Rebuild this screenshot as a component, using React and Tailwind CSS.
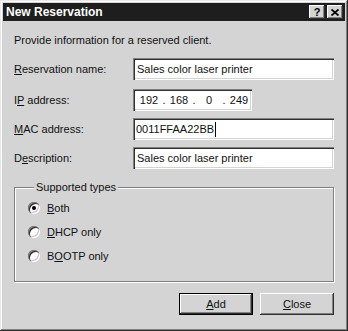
const font = { fontFamily: '"Liberation Sans", Arial, sans-serif' };

const sunken =
  "bg-white shadow-[inset_1px_1px_0_#808080,inset_2px_2px_0_#303030,inset_-1px_-1px_0_#ffffff,inset_-2px_-2px_0_#d4d4d4]";
const raised =
  "bg-[#d4d4d4] shadow-[inset_-1px_-1px_0_#303030,inset_1px_1px_0_#ffffff,inset_-2px_-2px_0_#808080]";

function Field({ label, children }) {
  return (
    <div className="flex items-center h-[22px]">
      <div className="w-[119px]">{label}</div>
      {children}
    </div>
  );
}

function Radio({ checked, children }) {
  return (
    <div className="flex items-center h-[24px]">
      <span className="relative w-[12px] h-[12px] rounded-full bg-white shadow-[inset_1px_1px_0_#808080,inset_2px_2px_0_#303030,inset_-1px_-1px_0_#ffffff,inset_-2px_-2px_0_#c8c8c8]">
        {checked && <span className="absolute left-[4px] top-[4px] w-[4px] h-[4px] rounded-full bg-black" />}
      </span>
      <span className="ml-[7px]">{children}</span>
    </div>
  );
}

export default function App() {
  return (
    <div
      style={font}
      className="w-[348px] h-[331px] bg-[#d4d4d4] text-[11px] leading-[14px] text-[#111] p-[3px] flex flex-col shadow-[inset_-1px_-1px_0_#303030,inset_1px_1px_0_#e8e8e8,inset_-2px_-2px_0_#808080,inset_2px_2px_0_#ffffff]"
    >
      <div className="h-[18px] bg-[#1e1e1e] flex items-center pl-[3px] pr-[2px]">
        <span className="text-white font-bold text-[12px] flex-1">New Reservation</span>
        <div className="flex gap-[2px]">
          <div className={`${raised} w-[16px] h-[14px] flex items-center justify-center`}>
            <span className="font-bold text-[11px] leading-none text-black">?</span>
          </div>
          <div className={`${raised} w-[16px] h-[14px] flex items-center justify-center`}>
            <svg width="8" height="7" viewBox="0 0 8 7">
              <path d="M0.5 0.5 L7.5 6.5 M7.5 0.5 L0.5 6.5" stroke="#000" strokeWidth="1.8" />
            </svg>
          </div>
        </div>
      </div>

      <div className="px-[11px] flex flex-col">
        <div className="mt-[12px]">Provide information for a reserved client.</div>

        <div className="mt-[11px] flex flex-col">
          <Field label={<><u>R</u>eservation name:</>}>
            <div className={`${sunken} flex-1 h-[22px] flex items-center pl-[4px]`}>Sales color laser printer</div>
          </Field>
          <div className="mt-[9px]">
            <Field label={<>I<u>P</u> address:</>}>
              <div className={`${sunken} w-[119px] h-[22px] flex items-center pl-[4px]`}>
                {["192", "168", "0", "249"].map((p, i) => (
                  <div key={i} className="flex">
                    {i > 0 && <span className="w-[6px] text-center">.</span>}
                    <span className="w-[24px] text-center">{p}</span>
                  </div>
                ))}
              </div>
            </Field>
          </div>
          <div className="mt-[7px]">
            <Field label={<><u>M</u>AC address:</>}>
              <div className={`${sunken} flex-1 h-[22px] flex items-center pl-[3px]`}>
                0011FFAA22BB<span className="w-[1px] h-[15px] bg-black ml-[1px]" />
              </div>
            </Field>
          </div>
          <div className="mt-[7px]">
            <Field label={<>D<u>e</u>scription:</>}>
              <div className={`${sunken} flex-1 h-[22px] flex items-center pl-[4px]`}>Sales color laser printer</div>
            </Field>
          </div>
        </div>

        <fieldset className="mt-[11px] border border-[#808080] shadow-[1px_1px_0_#ffffff,inset_1px_1px_0_#ffffff] pl-[13px] pt-[2px] pb-[13px]">
          <legend className="ml-[6px] px-[2px] bg-[#d4d4d4]">Supported types</legend>
          <Radio checked>
            <u>B</u>oth
          </Radio>
          <Radio>
            <u>D</u>HCP only
          </Radio>
          <Radio>
            B<u>O</u>OTP only
          </Radio>
        </fieldset>

        <div className="mt-[11px] flex justify-end gap-[7px]">
          <div className="w-[74px] h-[22px] border border-black">
            <div className={`${raised} w-full h-full flex items-center justify-center`}>
              <span>
                <u>A</u>dd
              </span>
            </div>
          </div>
          <div className={`${raised} w-[74px] h-[22px] flex items-center justify-center`}>
            <span>
              <u>C</u>lose
            </span>
          </div>
        </div>
      </div>
    </div>
  );
}
